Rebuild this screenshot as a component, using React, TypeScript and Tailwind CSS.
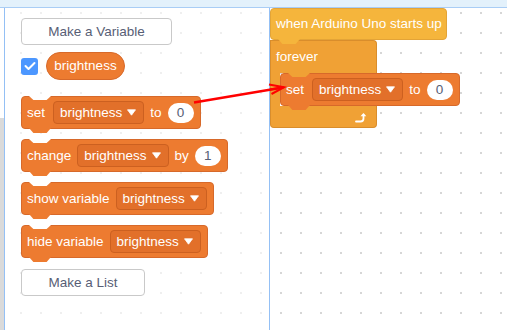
import React from "react";

function Caret() {
  return (
    <svg width="9" height="7" viewBox="0 0 9 7" className="shrink-0">
      <path d="M0.5 0.8 H8.5 L4.5 6.2 Z" fill="white" stroke="white" strokeWidth="0.8" strokeLinejoin="round" />
    </svg>
  );
}

function Dropdown({ text }: { text: string }) {
  return (
    <div className="flex items-center h-[23px] rounded-[4px] border border-[#cc6020] bg-[#e2702a] pl-[6px] pr-[7px] gap-[5px]">
      <span>{text}</span>
      <Caret />
    </div>
  );
}

function Num({ v }: { v: string }) {
  return (
    <div className="flex items-center justify-center h-[20px] w-[26px] rounded-full bg-white text-[#575e75]">
      {v}
    </div>
  );
}

function VarBlock({
  children,
  notchClass,
}: {
  children: React.ReactNode;
  notchClass: string;
}) {
  return (
    <div className="relative self-start flex items-center h-[33px] rounded-[4px] border border-[#d7692a] bg-[#ed7b30] pl-[5px] pr-[6px] gap-[6px] text-white">
      <div className={notchClass} />
      {children}
      <div className="absolute bottom-[-5px] left-[7px] w-[22px] h-[5px] bg-[#ed7b30] [clip-path:polygon(0_0,100%_0,80%_100%,20%_100%)]" />
    </div>
  );
}

const whiteNotch =
  "absolute top-[-1px] left-[7px] w-[22px] h-[4px] bg-white [clip-path:polygon(0_0,100%_0,80%_100%,20%_100%)]";
const foreverNotch =
  "absolute top-[-1px] left-[7px] w-[22px] h-[4px] bg-[#f0a135] [clip-path:polygon(0_0,100%_0,80%_100%,20%_100%)]";

function Button({ text, w }: { text: string; w: string }) {
  return (
    <div
      className={`flex items-center justify-center h-[27px] rounded-[4px] border border-[#c9c9c9] bg-white text-[#575e75] ${w}`}
    >
      {text}
    </div>
  );
}

function LoopArrow() {
  return (
    <svg width="12" height="11" viewBox="0 0 12 11">
      <path d="M1 9.5 H5.5 Q8.5 9.5 8.5 6.5 V3" fill="none" stroke="white" strokeWidth="1.8" strokeLinecap="round" />
      <path d="M5.5 4.2 L8.5 1 L11.3 4.2 Z" fill="white" />
    </svg>
  );
}

export default function App() {
  return (
    <div className="relative w-[507px] h-[330px] overflow-hidden bg-white font-['Liberation_Sans',Arial,sans-serif] text-[13.5px] leading-none [background-image:radial-gradient(circle,#d6d6d6_1px,transparent_1.4px)] [background-size:20px_20px] [background-position:-9px_3px]">
      <div className="h-[8px] bg-[#e3f1fb] border-b border-[#a9cdf5]" />
      <div className="flex h-[322px]">
        <div className="flex flex-col w-[4px]">
          <div className="h-[110px] bg-white" />
          <div className="flex-1 bg-[#dadada]" />
        </div>
        <div className="w-[266px] h-full border-l border-r border-[#94c0f5] bg-white/60 flex flex-col pl-[16px] pt-[10px]">
          <Button text="Make a Variable" w="w-[151px]" />
          <div className="flex items-center gap-[8px] mt-[7px]">
            <div className="flex items-center justify-center w-[17px] h-[17px] rounded-[3px] bg-[#4c97ff]">
              <svg width="12" height="10" viewBox="0 0 12 10">
                <path d="M1.5 5 L4.5 8 L10.5 2" fill="none" stroke="white" strokeWidth="2" strokeLinecap="round" strokeLinejoin="round" />
              </svg>
            </div>
            <div className="flex items-center justify-center h-[28px] w-[79px] rounded-full border border-[#d7692a] bg-[#ed7b30] text-white">
              brightness
            </div>
          </div>
          <div className="flex flex-col gap-[10px] mt-[16px]">
            <VarBlock notchClass={whiteNotch}>
              <span className="mr-[2px]">set</span>
              <Dropdown text="brightness" />
              <span>to</span>
              <Num v="0" />
            </VarBlock>
            <VarBlock notchClass={whiteNotch}>
              <span>change</span>
              <Dropdown text="brightness" />
              <span>by</span>
              <Num v="1" />
            </VarBlock>
            <VarBlock notchClass={whiteNotch}>
              <span>show variable</span>
              <Dropdown text="brightness" />
            </VarBlock>
            <VarBlock notchClass={whiteNotch}>
              <span>hide variable</span>
              <Dropdown text="brightness" />
            </VarBlock>
          </div>
          <div className="mt-[11px]">
            <Button text="Make a List" w="w-[124px]" />
          </div>
        </div>
        <div className="flex-1 flex flex-col items-start">
          <div className="relative z-[2] flex items-center h-[32px] w-[177px] rounded-[4px] border border-[#e3a437] bg-[#f5b53c] pl-[5px] text-white">
            <span>when Arduino Uno starts up</span>
            <div className="absolute bottom-[-5px] left-[7px] w-[22px] h-[5px] bg-[#f5b53c] [clip-path:polygon(0_0,100%_0,80%_100%,20%_100%)]" />
          </div>
          <div className="relative flex flex-col">
            <div className="flex items-center h-[33px] w-[107px] rounded-tr-[4px] border-t border-r border-l border-[#d98d2c] bg-[#f0a135] pl-[5px] text-white">
              forever
            </div>
            <div className="flex">
              <div className="w-[10px] border-l border-[#d98d2c] bg-[#f0a135]" />
              <VarBlock notchClass={foreverNotch}>
                <span className="mr-[2px]">set</span>
                <Dropdown text="brightness" />
                <span>to</span>
                <Num v="0" />
              </VarBlock>
            </div>
            <div className="flex items-center justify-end h-[22px] w-[107px] rounded-b-[4px] border-b border-r border-l border-[#d98d2c] bg-[#f0a135] pr-[9px] pt-[2px]">
              <LoopArrow />
            </div>
          </div>
        </div>
      </div>
      <svg className="absolute inset-0 pointer-events-none z-10" width="507" height="330" viewBox="0 0 507 330">
        <line x1="194" y1="102.5" x2="283" y2="87.5" stroke="#ff0000" strokeWidth="2.5" />
        <polyline points="269,84.5 284,87.3 271.5,94" fill="none" stroke="#ff0000" strokeWidth="2" />
        <line x1="270" y1="89.5" x2="284" y2="87.3" stroke="#ff0000" strokeWidth="2" />
      </svg>
    </div>
  );
}
